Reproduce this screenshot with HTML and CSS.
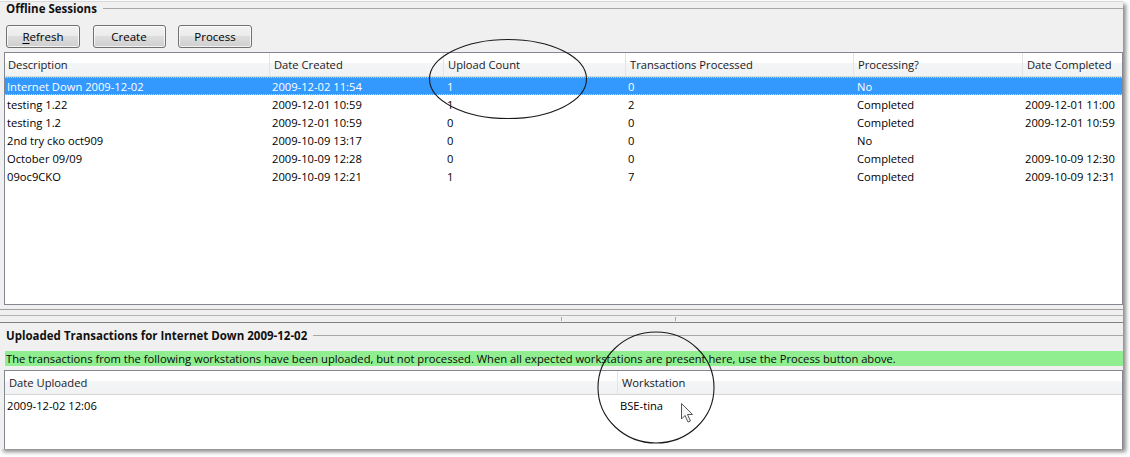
FILE: index.html
```html
<!DOCTYPE html>
<html>
<head>
<meta charset="utf-8">
<link rel="stylesheet" href="styles.css">
</head>
<body>
<div class="window">
  <div class="gtitle"><span>Offline Sessions</span><i class="rule"></i></div>
  <div class="toolbar">
    <button class="btn w74"><u>R</u>efresh</button>
    <button class="btn w73">Create</button>
    <button class="btn w74">Process</button>
  </div>
  <div class="table t1">
    <div class="tr head">
      <div class="th">Description</div>
      <div class="th">Date Created</div>
      <div class="th">Upload Count</div>
      <div class="th">Transactions Processed</div>
      <div class="th">Processing?</div>
      <div class="th">Date Completed</div>
    </div>
    <div class="tr sel">
      <div class="td">Internet Down 2009-12-02</div>
      <div class="td">2009-12-02 11:54</div>
      <div class="td">1</div>
      <div class="td">0</div>
      <div class="td">No</div>
      <div class="td"></div>
    </div>
    <div class="tr">
      <div class="td">testing 1.22</div>
      <div class="td">2009-12-01 10:59</div>
      <div class="td">1</div>
      <div class="td">2</div>
      <div class="td">Completed</div>
      <div class="td">2009-12-01 11:00</div>
    </div>
    <div class="tr">
      <div class="td">testing 1.2</div>
      <div class="td">2009-12-01 10:59</div>
      <div class="td">0</div>
      <div class="td">0</div>
      <div class="td">Completed</div>
      <div class="td">2009-12-01 10:59</div>
    </div>
    <div class="tr">
      <div class="td">2nd try cko oct909</div>
      <div class="td">2009-10-09 13:17</div>
      <div class="td">0</div>
      <div class="td">0</div>
      <div class="td">No</div>
      <div class="td"></div>
    </div>
    <div class="tr">
      <div class="td">October 09/09</div>
      <div class="td">2009-10-09 12:28</div>
      <div class="td">0</div>
      <div class="td">0</div>
      <div class="td">Completed</div>
      <div class="td">2009-10-09 12:30</div>
    </div>
    <div class="tr">
      <div class="td">09oc9CKO</div>
      <div class="td">2009-10-09 12:21</div>
      <div class="td">1</div>
      <div class="td">7</div>
      <div class="td">Completed</div>
      <div class="td">2009-10-09 12:31</div>
    </div>
  </div>
  <div class="splitter">
    <div class="mid"><i class="tick t-a"></i><i class="tick t-b"></i></div>
  </div>
  <div class="gtitle g2"><span>Uploaded Transactions for Internet Down 2009-12-02</span><i class="rule"></i></div>
  <div class="banner">The transactions from the following workstations have been uploaded, but not processed. When all expected workstations are present here, use the Process button above.</div>
  <div class="table t2">
    <div class="tr head">
      <div class="th">Date Uploaded</div>
      <div class="th">Workstation</div>
    </div>
    <div class="tr">
      <div class="td">2009-12-02 12:06</div>
      <div class="td">BSE-tina</div>
    </div>
  </div>
  <svg class="overlay" width="1130" height="457" viewBox="0 0 1130 457">
    <ellipse cx="508" cy="79" rx="78.5" ry="39.5" fill="none" stroke="#1a1a1a" stroke-width="1.1"/>
    <ellipse cx="656" cy="387.5" rx="58" ry="55.5" fill="none" stroke="#1a1a1a" stroke-width="1.1"/>
    <path d="M681.5 403.5 L681.5 419 L685 415.5 L688 422 L690.5 421 L687.5 414.5 L692.5 414.5 Z" fill="#f6f6f6" stroke="#555" stroke-width="1" stroke-linejoin="round"/>
  </svg>
</div>
</body>
</html>
```

FILE: styles.css
```css
html, body {
  margin: 0;
  padding: 0;
}
body {
  width: 1130px;
  height: 457px;
  background: #ffffff;
  font-family: "Open Sans", "Noto Sans", sans-serif;
  font-size: 11.2px;
  color: #000;
  overflow: hidden;
}
.window {
  position: relative;
  box-sizing: border-box;
  width: 1123px;
  height: 448px;
  margin-top: 1px;
  border-top: 1px solid #d9d9d9;
  background: #f0f0f0;
  box-shadow: 3px 3px 4px rgba(0, 0, 0, 0.45);
  display: flex;
  flex-direction: column;
}
.gtitle {
  display: flex;
  align-items: center;
  height: 13px;
  padding-left: 6px;
  font-weight: bold;
  font-size: 11.5px;
  color: #111;
  white-space: nowrap;
}
.gtitle .rule {
  flex: 1;
  height: 0;
  border-top: 1px solid #a7a7a7;
  margin-left: 6px;
}
.g2 {
  margin-top: 6px;
}
.toolbar {
  display: flex;
  margin-top: 10px;
  padding-left: 6px;
  gap: 12.5px;
}
.btn {
  box-sizing: border-box;
  height: 23px;
  padding: 0;
  border: 1px solid #707070;
  border-radius: 3px;
  background: linear-gradient(#f2f2f2 0%, #ebebeb 48%, #dddddd 50%, #cfcfcf 100%);
  box-shadow: inset 0 0 0 1px rgba(255, 255, 255, 0.75);
  font-family: inherit;
  font-size: 11.5px;
  color: #000;
  line-height: 19px;
}
.btn u {
  text-decoration-thickness: 1px;
  text-underline-offset: 2px;
}
.w74 { width: 74px; }
.w73 { width: 73px; }
.table {
  box-sizing: border-box;
  margin-left: 4px;
  border: 1px solid #828790;
  background: #fff;
}
.t1 {
  margin-top: 4px;
  height: 253px;
}
.t2 {
  margin-top: 4px;
  flex: 1;
  border-bottom: none;
}
.tr {
  display: grid;
  height: 18px;
  align-items: center;
  white-space: nowrap;
}
.t1 .tr {
  grid-template-columns: 264px 174px 182px 228px 169px 1fr;
}
.t2 .tr {
  grid-template-columns: 612px 1fr;
}
.tr.head {
  height: 24px;
  box-sizing: border-box;
  border-bottom: 1px solid #d5d5d5;
  background: linear-gradient(#ffffff 0%, #ffffff 42%, #f4f5f7 44%, #f1f2f4 100%);
  align-items: stretch;
}
.th {
  display: flex;
  align-items: center;
  padding-left: 4px;
  border-left: 1px solid #e3e4e6;
  color: #1a1a22;
}
.th:first-child {
  border-left: none;
  padding-left: 3px;
}
.t2 .th:first-child {
  padding-left: 4px;
}
.td {
  padding-left: 3px;
  overflow: hidden;
}
.td:first-child {
  padding-left: 2px;
}
.t1 .td:nth-child(3),
.t1 .td:nth-child(5) {
  padding-left: 4px;
}
.t2 .tr:not(.head) {
  margin-top: 1px;
}
.t2 .td:nth-child(2) {
  padding-left: 3px;
}
.tr.sel {
  box-sizing: border-box;
  background: #3399ff;
  color: #fff;
  border-top: 1px dotted #b8daff;
  border-bottom: 1px dotted #b8daff;
}
.splitter {
  margin-top: 4px;
  height: 7px;
  border-top: 1px solid #a0a0a0;
  border-bottom: 1px solid #7f7f7f;
  padding-top: 5px;
}
.mid {
  position: relative;
  border-top: 1px solid #b4b4b4;
  height: 5px;
}
.tick {
  position: absolute;
  top: 1px;
  width: 1px;
  height: 4px;
  background: #a8a8a8;
}
.t-a { left: 561px; }
.t-b { left: 675px; }
.banner {
  margin-top: 9px;
  margin-left: 5px;
  height: 15px;
  line-height: 15px;
  padding-left: 1px;
  background: #90ee90;
  white-space: nowrap;
  color: #0a0a0a;
}
.overlay {
  position: absolute;
  left: 0;
  top: -2px;
  pointer-events: none;
}
```
